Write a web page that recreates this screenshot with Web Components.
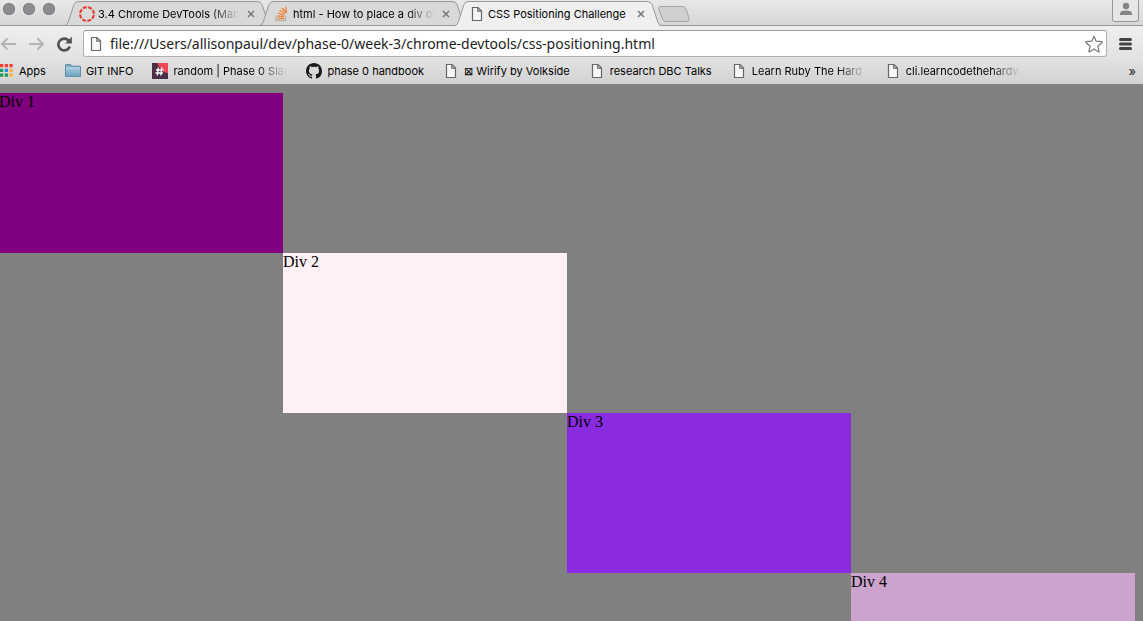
<!DOCTYPE html>
<html lang="en">
<head>
<meta charset="utf-8">
<title>CSS Positioning Challenge</title>
<style>
html,body{margin:0;height:100%}
body{overflow:hidden;background:#808080}
</style>
</head>
<body>
<browser-window>
  <tab-strip slot="tabs">
    <browser-tab icon="ring">3.4 Chrome DevTools (Manipulating)</browser-tab>
    <browser-tab icon="stack">html - How to place a div on top</browser-tab>
    <browser-tab icon="page" active>CSS Positioning Challenge</browser-tab>
  </tab-strip>
  <address-bar slot="address" url="file:///Users/allisonpaul/dev/phase-0/week-3/chrome-devtools/css-positioning.html"></address-bar>
  <bookmark-bar slot="bookmarks">
    <bookmark-link icon="apps">Apps</bookmark-link>
    <bookmark-link icon="folder">GIT INFO</bookmark-link>
    <bookmark-link icon="hash" fade>random | Phase 0 Slack</bookmark-link>
    <bookmark-link icon="github">phase 0 handbook</bookmark-link>
    <bookmark-link icon="page">⊠ Wirify by Volkside</bookmark-link>
    <bookmark-link icon="page">research DBC Talks</bookmark-link>
    <bookmark-link icon="page" fade>Learn Ruby The Hard Way</bookmark-link>
    <bookmark-link icon="page" fade>cli.learncodethehardway</bookmark-link>
  </bookmark-bar>
  <div-stairs>
    <color-box tone="purple" step="1">Div 1</color-box>
    <color-box tone="lavenderblush" step="2">Div 2</color-box>
    <color-box tone="blueviolet" step="3">Div 3</color-box>
    <color-box tone="#cca3cc" step="4">Div 4</color-box>
  </div-stairs>
</browser-window>
<script>
const ICONS = {
  page: '<svg viewBox="0 0 16 16" width="16" height="16"><path d="M3.500 1.500h5.500l3.500 3.500v9.500h-9z" fill="#f6f6f6" stroke="#666" stroke-width="1.200"/><path d="M8.800 1.500V5.200h3.700" fill="none" stroke="#666" stroke-width="1.200"/></svg>',
  ring: '<svg viewBox="0 0 16 16" width="16" height="16"><circle cx="8" cy="8" r="6.9" fill="none" stroke="#e33a2e" stroke-width="2.1" stroke-dasharray="3.9 1.52" transform="rotate(8 8 8)"/></svg>',
  stack: '<svg viewBox="0 0 16 16" width="16" height="16"><path d="M2 9.500v5h9.500v-5" fill="none" stroke="#b4b4b6" stroke-width="1.3"/><g stroke="#f08330" stroke-width="1.3"><path d="M3.500 12.500h6.500M3.600 10l6.500.7M4.100 7.200l6.300 1.900M5.500 4.300l5.500 3.200M8 2l4 4.800M11.500 1l1.200 5.500"/></g></svg>',
  apps: '<svg viewBox="0 0 16 16" width="16" height="16"><path fill="#ee4136" d="M2 1h3.3v3.3H2zM6.7 1H10v3.3H6.7zM11.4 1h3.3v3.3h-3.3z"/><path fill="#1b9c5a" d="M2 5.7h3.3V9H2zM2 10.4h3.3v3.3H2zM6.7 10.4H10v3.3H6.7z"/><path fill="#2d8be8" d="M6.7 5.7H10V9H6.7z"/><path fill="#fbb03b" d="M11.4 5.7h3.3V9h-3.3zM11.4 10.4h3.3v3.3h-3.3z"/></svg>',
  folder: '<svg viewBox="0 0 16 16" width="16" height="16"><defs><linearGradient id="f" x2="0" y2="1"><stop stop-color="#a6cade"/><stop offset="1" stop-color="#6b9fbd"/></linearGradient></defs><path d="M.5 13.5V2.2q0-.7.7-.7h4.3l1.2 1.7h8q.8 0 .8.7v9.6z" fill="#82adc6" stroke="#5c8ca8"/><path d="M1 5h14v8.5H1z" fill="url(#f)"/><path d="M1 4.9h14" stroke="#c5dfec"/></svg>',
  hash: '<svg viewBox="0 0 16 16" width="16" height="16"><path fill="#493044" d="M0 0h16v16H0z"/><path fill="#ee4757" d="M5.500 0H16v10.300q-5-1-7.500-4.300T5.500 0z"/><path d="M6.300 4.500L5.300 12.500M9.800 4.500L8.800 12.500M4 7h7.500M3.500 10H11" stroke="#fff" stroke-width="1.4"/></svg>',
  github: '<svg viewBox="0 0 16 16" width="16" height="16"><path fill="#1b1817" d="M8 0C3.58 0 0 3.58 0 8c0 3.54 2.29 6.53 5.47 7.59.4.07.55-.17.55-.38 0-.19-.01-.82-.01-1.49-2.01.37-2.53-.49-2.69-.94-.09-.23-.48-.94-.82-1.13-.28-.15-.68-.52-.01-.53.63-.01 1.08.58 1.23.82.72 1.21 1.87.87 2.33.66.07-.52.28-.87.51-1.07-1.78-.2-3.64-.89-3.64-3.95 0-.87.31-1.59.82-2.15-.08-.2-.36-1.02.08-2.12 0 0 .67-.21 2.2.82.64-.18 1.32-.27 2-.27s1.36.09 2 .27c1.53-1.04 2.2-.82 2.2-.82.44 1.1.16 1.92.08 2.12.51.56.82 1.27.82 2.15 0 3.07-1.87 3.75-3.65 3.95.29.25.54.73.54 1.48 0 1.07-.01 1.93-.01 2.2 0 .21.15.46.55.38A8.01 8.01 0 0016 8c0-4.42-3.58-8-8-8z"/></svg>'
};

function define(name, render) {
  customElements.define(name, class extends HTMLElement {
    constructor() {
      super();
      this.attachShadow({ mode: 'open' });
    }
    connectedCallback() {
      const t = document.createElement('template');
      t.innerHTML = render(this);
      this.shadowRoot.replaceChildren(t.content.cloneNode(true));
    }
  });
}

define('browser-window', () => `
<style>
:host{display:flex;flex-direction:column;height:100vh;overflow:hidden}
header{flex:none;font-family:Inter,"Liberation Sans",sans-serif;font-size:11px;color:#000}
main{flex:1;min-height:0;overflow:hidden;background:#808080;padding:9px 8px 0 0;font:16px/18px "Liberation Serif",serif}
</style>
<header><slot name="tabs"></slot><slot name="address"></slot><slot name="bookmarks"></slot></header>
<main><slot></slot></main>`);

define('tab-strip', () => `
<style>
:host{display:flex;height:26px;background:linear-gradient(#e8e8e8,#d6d6d6);box-shadow:inset 0 -1px #989898}
.lights{display:flex;gap:8px;padding:3px 10px 0 3px;height:12px}
.lights i{width:12px;height:12px;border-radius:50%;background:#8c8c90;box-shadow:inset 0 0 0 1px #808084}
nav{display:flex}
button{appearance:none;border:0;background:none;padding:0;margin:0;display:block}
.new{margin:5px 0 0 7px;height:18px}
.user{box-sizing:border-box;margin:0 4px 4px auto;width:27px;border:1px solid #979797;border-top:0;border-radius:0 0 3px 3px;background:#e6e6e6;display:flex;justify-content:center}
svg{display:block}
</style>
<div class="lights"><i></i><i></i><i></i></div>
<nav><slot></slot></nav>
<button class="new" aria-label="New tab"><svg width="34" height="18" viewBox="0 0 34 18"><path d="M3.500 1.500h22q2.500 0 3.500 2.500l3 9q.8 3.500-1.500 3.500H9q-2.500 0-3.500-2.500L1.800 4q-.8-2.500 1.700-2.500z" fill="#d0d0d0" stroke="#a4a4a4"/></svg></button>
<button class="user" aria-label="Profile"><svg width="14" height="17" viewBox="0 0 14 17"><circle cx="7" cy="6" r="3.2" fill="#848484"/><path d="M1 15v-1.500q0-3 6-3t6 3V15z" fill="#848484"/></svg></button>`);

define('browser-tab', el => {
  const on = el.hasAttribute('active');
  const fill = on ? '#efefef' : '#d9d9d9';
  const base = on ? '' : '<path d="M0 25.500h14" stroke="#989898"/>';
  const side = flip => `<svg class="side" width="14" height="26" viewBox="0 0 14 26"><g ${flip ? 'transform="matrix(-1 0 0 1 14 0)"' : ''}><path d="M0 26q2-.5 3-3L9 4.500Q10 1.500 14 1.500V26z" fill="${fill}"/><path d="M0 25.500q2-.5 3-3L9 4.500Q10 1.500 14 1.500" fill="none" stroke="#989898"/>${base}</g></svg>`;
  return `
<style>
:host{display:flex;width:206px;height:26px;margin-right:-11px;position:relative;z-index:${on ? 2 : 1}}
.side{flex:none;display:block}
.body{flex:1;min-width:0;box-sizing:border-box;display:flex;align-items:center;margin-top:1px;border-top:1px solid #989898;background:${fill};${on ? '' : 'box-shadow:inset 0 -1px #989898;'}}
.icon{flex:none;height:16px}
.icon svg{display:block}
.title{flex:none;width:142px;margin-left:3px;line-height:16px;white-space:nowrap;overflow:hidden;${on ? '' : 'mask-image:linear-gradient(90deg,#000 112px,transparent);'}}
button{appearance:none;border:0;background:none;padding:0;margin-left:6px;width:10px;height:10px}
button svg{display:block}
</style>
${side(false)}<div class="body"><span class="icon">${ICONS[el.getAttribute('icon')]}</span><span class="title"><slot></slot></span><button aria-label="Close tab"><svg width="10" height="10" viewBox="0 0 10 10"><path d="M2 2l6 6M8 2L2 8" stroke="#777" stroke-width="1.500"/></svg></button></div>${side(true)}`;
});

define('address-bar', el => `
<style>
:host{display:flex;align-items:center;box-sizing:border-box;height:33px;padding:4px 0 2px;background:linear-gradient(#efefef,#e2e2e2)}
button{appearance:none;border:0;background:none;padding:0;margin:0;flex:none;display:block}
svg{display:block}
.nav{display:flex;gap:12px;width:83px;align-items:center}
label{flex:1;min-width:0;height:27px;box-sizing:border-box;display:flex;align-items:center;background:#fff;border:1px solid #b0b0b0;border-top-color:#999;border-radius:3px;padding:0 3px 0 4px}
input{flex:1;min-width:0;border:0;outline:0;background:none;padding:0;margin-left:6px;font:14px/20px "Noto Sans","Liberation Sans",sans-serif;color:#222}
.menu{padding:0 10px 0 11px}
</style>
<div class="nav">
<button aria-label="Back"><svg width="16" height="16" viewBox="0 0 16 16"><path d="M16 8H2M7.500 2.500L2 8l5.500 5.500" fill="none" stroke="#b4b4b4" stroke-width="2"/></svg></button>
<button aria-label="Forward"><svg width="16" height="16" viewBox="0 0 16 16"><path d="M1 8h14M9.500 2.500L15 8l-5.500 5.500" fill="none" stroke="#b4b4b4" stroke-width="2"/></svg></button>
<button aria-label="Reload"><svg width="16" height="16" viewBox="0 0 16 16"><path d="M12.700 4.600A5.900 5.900 0 1 0 13.800 10.500" fill="none" stroke="#505050" stroke-width="2.600"/><path d="M15.800.8v6.700H9.200z" fill="#505050"/></svg></button>
</div>
<label>${ICONS.page}<input aria-label="Address" value="${el.getAttribute('url')}">
<button aria-label="Bookmark this page"><svg width="18" height="18" viewBox="0 0 18 18"><path d="M9 1.200L11.200 6.200l5.600.5q.9.300.2 1l-4.200 3.500 1.300 5q0 1-.9.600L9 14l-4.200 2.800q-.9.400-.9-.6l1.300-5L1 7.700q-.7-.7.2-1l5.600-.5z" fill="#fff" stroke="#777" stroke-width="1.200" stroke-linejoin="round"/></svg></button></label>
<button class="menu" aria-label="Menu"><svg width="15" height="14" viewBox="0 0 15 14"><path d="M2.500 2.500h10M2.500 7h10M2.500 11.500h10" stroke="#444" stroke-width="3" stroke-linecap="round"/></svg></button>`);

define('bookmark-bar', () => `
<style>
:host{display:flex;align-items:center;box-sizing:border-box;height:25px;padding-bottom:1px;background:linear-gradient(#e2e2e2,#d2d2d2)}
nav{display:flex;gap:19px;flex:1;min-width:0;overflow:hidden}
button{appearance:none;border:0;background:none;padding:0 7px;margin:0;font:13px/16px Inter,"Liberation Sans",sans-serif;color:#222}
</style>
<nav><slot></slot></nav><button aria-label="More bookmarks">»</button>`);

define('bookmark-link', el => `
<style>
:host{display:block;flex:none}
:host(:first-child){margin-left:-2px}
a{display:flex;align-items:center;gap:5px;color:inherit;text-decoration:none;white-space:nowrap;line-height:16px}
svg{display:block;flex:none}
:host([fade]) span{width:114px;overflow:hidden;mask-image:linear-gradient(90deg,#000 84px,transparent)}
</style>
<a href="#">${ICONS[el.getAttribute('icon')]}<span><slot></slot></span></a>`);

define('div-stairs', () => `
<style>:host{display:grid;grid-template-columns:repeat(4,1fr);grid-auto-rows:160px;margin-left:-1px}</style>
<slot></slot>`);

define('color-box', el => `
<style>:host{display:block;background:${el.getAttribute('tone')};grid-area:${el.getAttribute('step')}/${el.getAttribute('step')}}</style>
<slot></slot>`);
</script>
</body>
</html>
